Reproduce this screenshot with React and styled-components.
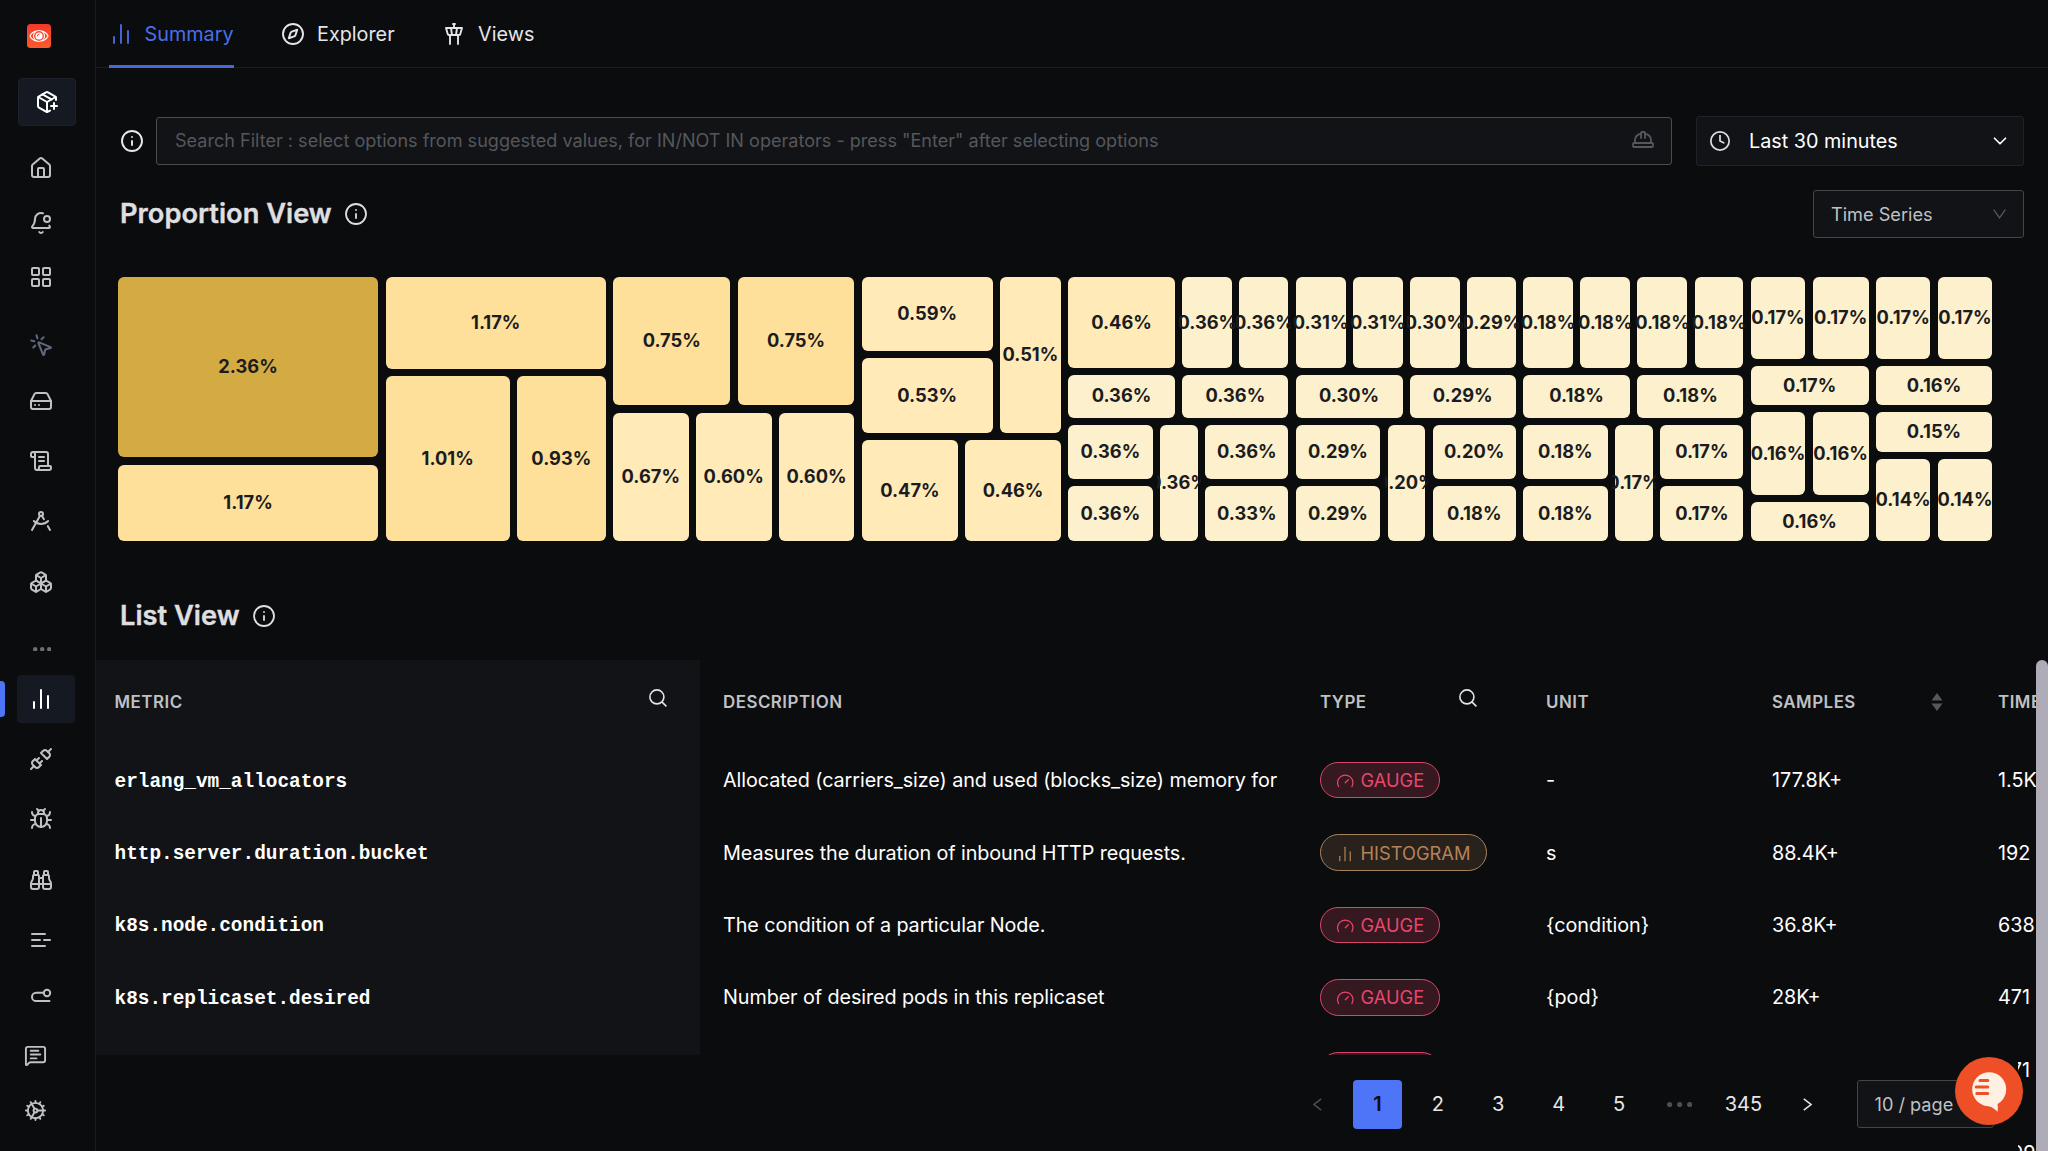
import React from 'react';
import styled, { createGlobalStyle, css } from 'styled-components';
import {
  BellDot,
  Binoculars,
  Boxes,
  Bug,
  ChartNoAxesColumn,
  ChevronDown,
  Clock,
  Cog,
  Compass,
  DraftingCompass,
  Gauge,
  HardDrive,
  HardHat,
  House,
  Info,
  LayoutGrid,
  MessageSquareText,
  MousePointerClick,
  PackagePlus,
  ScrollText,
  TowerControl,
  Unplug,
} from 'lucide-react';

const GlobalStyle = createGlobalStyle`
  *, *::before, *::after { box-sizing: border-box; }
  html, body { margin: 0; background: #0b0c0e; overflow: hidden; }
  body { font-family: Inter, "Liberation Sans", sans-serif; color: #fff; }
`;

/* ---------- shell ---------- */

const Shell = styled.div`
  position: relative;
  display: grid;
  grid-template-columns: 96px 1fr;
  width: 2048px;
  height: 1151px;
  overflow: hidden;
  background: #0b0c0e;
`;

const Sidebar = styled.nav`
  display: flex;
  flex-direction: column;
  align-items: flex-start;
  border-right: 1px solid #1b1c1f;
  padding-top: 24px;
`;

const LogoBox = styled.div`
  display: flex;
  width: 24px;
  height: 24px;
  margin-left: 27px;
  border-radius: 3.5px;
  background: linear-gradient(180deg, #f2392c, #fb5a2e);
`;

const NewSource = styled.div`
  display: flex;
  align-items: center;
  justify-content: center;
  width: 58px;
  height: 48px;
  margin: 30px 0 0 18px;
  border: 1px solid #1d212b;
  border-radius: 4px;
  background: #151921;
  color: #fff;
`;

const NavItem = styled.div`
  position: relative;
  display: flex;
  align-items: center;
  width: 58px;
  height: 48px;
  margin: ${(p) => p.$gap}px 0 0 17px;
  padding-left: ${(p) => p.$inset ?? 12}px;
  border-radius: 4px;
  color: ${(p) => (p.$muted ? '#62687c' : '#c0c1c3')};
  ${(p) =>
    p.$active &&
    css`
      background: #151921;
      color: #fff;
      &::before {
        content: '';
        position: absolute;
        left: -17px;
        top: 6px;
        width: 5px;
        height: 36px;
        border-radius: 0 4px 4px 0;
        background: #4e74f8;
      }
    `}
`;

const Main = styled.main`
  display: flex;
  flex-direction: column;
  min-width: 0;
`;

/* ---------- tabs ---------- */

const TabBar = styled.div`
  display: flex;
  flex: none;
  gap: 47.5px;
  height: 68px;
  padding-left: 12.5px;
  border-bottom: 1px solid #1b1d26;
`;

const Tab = styled.div`
  display: flex;
  align-items: center;
  gap: 12px;
  height: 68px;
  font-size: 19.8px;
  border-bottom: 3.5px solid ${(p) => (p.$active ? '#4568dc' : 'transparent')};
  padding-top: 2px;
  color: ${(p) => (p.$active ? '#4a6fe9' : '#e4e5e7')};
`;

/* ---------- filter row ---------- */

const FilterRow = styled.div`
  display: flex;
  flex: none;
  align-items: center;
  height: 50px;
  margin-top: 48px;
  padding: 0 24px;
`;

const SearchBox = styled.div`
  display: flex;
  align-items: center;
  justify-content: space-between;
  width: 1516px;
  height: 48px;
  margin: 0 24px 0 12px;
  padding: 0 16px 1.5px 18px;
  border: 1px solid #4a4c50;
  border-radius: 3px;
  background: #111317;
  color: #55575b;
  font-size: 18.07px;
`;

const TimePicker = styled.div`
  display: flex;
  align-items: center;
  flex: 1;
  height: 50px;
  padding: 0 12px 1px 12px;
  border: 1px solid #1f222b;
  border-radius: 3px;
  background: #111317;
  font-size: 19.8px;
  color: #fff;
`;

const TimeLabel = styled.span`
  flex: 1;
  margin-left: 18px;
`;

/* ---------- sections ---------- */

const SectionHeader = styled.div`
  display: flex;
  flex: none;
  align-items: center;
  height: 48px;
  margin-top: ${(p) => p.$top}px;
  padding: 0 24px;
`;

const SectionTitle = styled.h2`
  margin: 0 12px 0 0;
  padding-bottom: 1px;
  font-size: 27.25px;
  font-weight: 600;
  color: #dfdfe0;
  white-space: nowrap;
  -webkit-text-stroke: 0.4px #dfdfe0;
`;

const Spacer = styled.div`
  flex: 1;
`;

const Select = styled.div`
  display: flex;
  align-items: center;
  justify-content: space-between;
  width: ${(p) => p.$width}px;
  height: 48px;
  padding: 0 17px 1px;
  border: 1px solid #42454a;
  border-radius: 3px;
  background: #111317;
  color: #c0c1c3;
  font-size: 18.15px;
  white-space: nowrap;
`;

/* ---------- treemap ---------- */

const TreemapBox = styled.div`
  display: flex;
  flex: none;
  width: 1874.6px;
  height: 264px;
  margin: 39px 0 0 21.7px;
`;

const Split = styled.div`
  display: flex;
  flex: ${(p) => p.$size} 1 0;
  flex-direction: ${(p) => (p.$column ? 'column' : 'row')};
  gap: 7.2px;
  min-width: 0;
  min-height: 0;
`;

const tileColors = { high: '#d4aa43', mid: '#fee09a', low: '#ffeab8', faint: '#fdf0cd' };

const Tile = styled.div`
  display: flex;
  flex: ${(p) => p.$size} 1 0;
  align-items: center;
  justify-content: center;
  min-width: 0;
  min-height: 0;
  padding-bottom: 1.5px;
  overflow: clip;
  overflow-clip-margin: 3px;
  border-radius: 6px;
  background: ${(p) => tileColors[p.$tone]};
  color: #1b1c20;
  font-size: 18.3px;
  font-weight: 700;
  white-space: nowrap;
`;

/* ---------- table ---------- */

const Table = styled.div`
  display: flex;
  flex-direction: column;
  flex: none;
  margin-top: 20px;
`;

const columns = '604px 602px 226px 226px 226px 68px';

const HeadRow = styled.div`
  display: grid;
  grid-template-columns: ${columns};
  height: 84px;
`;

const HeadCell = styled.div`
  display: flex;
  align-items: center;
  justify-content: space-between;
  padding-left: ${(p) => p.$left ?? 18}px;
  padding-right: ${(p) => p.$right ?? 0}px;
  background: ${(p) => (p.$pinned ? '#111317' : 'transparent')};
  color: #c0c1c3;
  font-size: 16.9px;
  font-weight: 600;
  letter-spacing: 0.5px;
  white-space: nowrap;
  overflow: hidden;

  svg { flex: none; }
`;

const SearchSlot = styled.span`
  display: flex;
  margin-bottom: 8px;
`;

const Row = styled.div`
  display: grid;
  grid-template-columns: ${columns};
  height: ${(p) => p.$height}px;
`;

const Cell = styled.div`
  display: flex;
  align-items: center;
  min-width: 0;
  padding-left: ${(p) => p.$left ?? 18}px;
  font-size: 19.8px;
  white-space: nowrap;
  color: #fff;
`;

const MetricCell = styled(Cell)`
  padding-top: 3px;
  background: #111317;
  font-family: "Liberation Mono", "DejaVu Sans Mono", monospace;
  font-size: 19.4px;
  font-weight: 700;
`;

const Description = styled.span`
  letter-spacing: -0.09px;
`;

const pillTones = {
  GAUGE: { bg: '#351820', line: '#d9466c', text: '#e8476c' },
  HISTOGRAM: { bg: '#29211c', line: '#a8845c', text: '#b58258' },
};

const Pill = styled.span`
  display: flex;
  align-items: center;
  gap: 6px;
  height: 36.5px;
  padding: 0 15px 0 15px;
  border: 1.4px solid ${(p) => pillTones[p.$kind].line};
  border-radius: 19px;
  background: ${(p) => pillTones[p.$kind].bg};
  color: ${(p) => pillTones[p.$kind].text};
  font-size: 18.3px;
`;

const PillIcon = styled.span`
  display: flex;
  justify-content: center;
  width: 18.5px;
  padding-top: 2px;
`;

/* ---------- overlays ---------- */

const Pager = styled.div`
  position: absolute;
  left: 96px;
  bottom: 0;
  width: 1921.5px;
  height: 96px;
  display: flex;
  justify-content: flex-end;
  gap: 12px;
  padding: 25px 24px 0 0;
  background: #0b0c0e;
`;

const PageButton = styled.div`
  display: flex;
  align-items: center;
  justify-content: center;
  width: ${(p) => p.$width ?? 48.4}px;
  height: 48.5px;
  border-radius: 4px;
  font-size: 20px;
  color: ${(p) => (p.$active ? '#0b0c0e' : '#e6e6e7')};
  background: ${(p) => (p.$active ? '#4e74f8' : 'transparent')};
  font-weight: ${(p) => (p.$active ? 600 : 400)};
`;

const PageSize = styled.div`
  margin-left: 13px;
`;

const ChatButton = styled.div`
  position: absolute;
  left: 1955.3px;
  top: 1057px;
  display: flex;
  width: 68px;
  height: 68px;
  border-radius: 50%;
  background: #ee4f27;
`;

const ScrollThumb = styled.div`
  position: absolute;
  right: 0;
  top: 660px;
  bottom: 0;
  width: 12.4px;
  border-radius: 6px 6px 0 0;
  background: #aeacb6;
`;

/* ---------- drawings ---------- */

const LogoMark = () => (
  <svg width="24" height="24" viewBox="0 0 24 24" fill="none" stroke="#fff">
    <path d="M9 7.2C6 7.8 4 10 3 12c1 2 3 4.2 6 4.8M15 7.2c3 .6 5 2.8 6 4.8-1 2-3 4.2-6 4.8" strokeWidth="1.2" strokeLinecap="round" />
    <circle cx="12" cy="12" r="5.500" strokeWidth="1.1" />
    <circle cx="12" cy="12" r="3.6" fill="#fff" stroke="none" />
    <path d="M10.2 12a1.9 1.9 0 0 1 1.9-1.9" stroke="#f4472d" strokeWidth=".9" strokeLinecap="round" />
  </svg>
);

const LogLinesIcon = () => (
  <svg width="24" height="24" viewBox="0 0 24 24" fill="none" stroke="currentColor" strokeWidth="2" strokeLinecap="round">
    <path d="M3 6h13M3 12h8M15 12h6M3 18h13" />
  </svg>
);

const RouteIcon = () => (
  <svg width="24" height="24" viewBox="0 0 24 24" fill="none" stroke="currentColor" strokeWidth="2" strokeLinecap="round">
    <circle cx="18" cy="10" r="3.2" />
    <path d="M14.5 9.7H7.2a4.2 4.2 0 0 0 0 8.4H20.5" />
  </svg>
);

const DotsIcon = ({ gap, r, color }) => (
  <svg width={gap * 2 + r * 2} height={r * 2} fill={color}>
    {[0, 1, 2].map((i) => (
      <circle key={i} cx={r + i * gap} cy={r} r={r} />
    ))}
  </svg>
);

const SearchIcon = () => (
  <svg width="18" height="18" viewBox="0 0 18 18" fill="none" stroke="#e3e4e5" strokeWidth="1.6">
    <circle cx="7.9" cy="7.9" r="7" />
    <path d="M12.9 12.9l4.5 4.5" />
  </svg>
);

const SortIcon = () => (
  <svg width="12" height="18" viewBox="0 0 12 18" fill="#55575b">
    <path d="M6 0l5.500 7.500H.5zM6 18l5.500-7.500H.5z" />
  </svg>
);

const ThinChevron = ({ color = '#55575b' }) => (
  <svg width="13" height="10" viewBox="0 0 13 10" fill="none" stroke={color} strokeWidth="1.3">
    <path d="M.7.7l5.800 8.200L12.300.7" />
  </svg>
);

const ArrowIcon = ({ flip, color }) => (
  <svg width="9" height="13" viewBox="0 0 9 13" fill="none" stroke={color} strokeWidth="1.5">
    <path d={flip ? 'M8.2.8L1 6.500l7.200 5.700' : 'M.8.8L8 6.500.8 12.200'} />
  </svg>
);

const ChatIcon = () => (
  <svg width="68" height="68" viewBox="0 0 68 68">
    <circle cx="34.2" cy="32.3" r="17" fill="#fef1e3" />
    <path d="M30 48.500c4 0 8.500 2.200 12.600 6.200.4-3 .3-6-.2-9z" fill="#fef1e3" />
    <path d="M25 23.400h7.800M21.200 30h11.600M21.800 36.400h11" stroke="#ee4f27" strokeWidth="3" strokeLinecap="round" />
  </svg>
);

/* ---------- data ---------- */

const navItems = [
  { icon: <House />, gap: 18 },
  { icon: <BellDot />, gap: 7 },
  { icon: <LayoutGrid />, gap: 6 },
  { icon: <MousePointerClick size={25} />, gap: 20, muted: true },
  { icon: <HardDrive />, gap: 8 },
  { icon: <ScrollText />, gap: 12 },
  { icon: <DraftingCompass />, gap: 12 },
  { icon: <Boxes />, gap: 13 },
  { icon: <DotsIcon gap={7} r={2.2} color="#6c6f78" />, gap: 19, inset: 16 },
  { icon: <ChartNoAxesColumn />, gap: 2, active: true },
  { icon: <Unplug />, gap: 12 },
  { icon: <Bug />, gap: 12 },
  { icon: <Binoculars />, gap: 13 },
  { icon: <LogLinesIcon />, gap: 12 },
  { icon: <RouteIcon />, gap: 7 },
  { icon: <MessageSquareText size={23} />, gap: 12, inset: 7 },
  { icon: <Cog size={23} />, gap: 7, inset: 7 },
];

const row = (size, ...items) => ({ size, items });
const col = (size, ...items) => ({ size, items, column: true });
const t = (size, label, tone = 'faint') => ({ size, label, tone });

const treemap = row(
  1,
  col(261, t(181, '2.36%', 'high'), t(75.8, '1.17%', 'mid')),
  col(220.3, t(90.7, '1.17%', 'mid'), row(166, t(124, '1.01%', 'mid'), t(89, '0.93%', 'mid'))),
  col(
    241.6,
    row(128.3, t(117.6, '0.75%', 'mid'), t(116.8, '0.75%', 'mid')),
    row(128.5, t(75.8, '0.67%', 'low'), t(75.8, '0.60%', 'low'), t(75.8, '0.60%', 'low'))
  ),
  col(
    199.3,
    row(155.7, col(131.4, t(74, '0.59%', 'low'), t(74.5, '0.53%', 'low')), t(60.7, '0.51%', 'low')),
    row(101, t(96.8, '0.47%', 'low'), t(95.3, '0.46%', 'low'))
  ),
  col(
    220.7,
    row(90.7, t(107.3, '0.46%', 'low'), t(50, '0.36%'), t(49, '0.36%')),
    row(42.6, t(107.3, '0.36%'), t(106.2, '0.36%')),
    row(116.3, col(85, t(54.7, '0.36%'), t(54.7, '0.36%')), t(38, '0.36%'), col(83.3, t(54.7, '0.36%'), t(54.7, '0.33%')))
  ),
  col(
    220.3,
    row(90.7, t(50, '0.31%'), t(50, '0.31%'), t(50, '0.30%'), t(48.7, '0.29%')),
    row(42.6, t(107, '0.30%'), t(106, '0.29%')),
    row(116.3, col(85, t(54.7, '0.29%'), t(54.7, '0.29%')), t(38, '0.20%'), col(83.3, t(54.7, '0.20%'), t(54.7, '0.18%')))
  ),
  col(
    220.7,
    row(90.7, t(50, '0.18%'), t(50, '0.18%'), t(50, '0.18%'), t(48.7, '0.18%')),
    row(42.6, t(107.3, '0.18%'), t(106, '0.18%')),
    row(116.3, col(85, t(54.7, '0.18%'), t(54.7, '0.18%')), t(38, '0.17%'), col(83.3, t(54.7, '0.17%'), t(54.7, '0.17%')))
  ),
  col(
    118,
    row(83, t(54.7, '0.17%'), t(55.8, '0.17%')),
    t(38, '0.17%'),
    row(83.6, t(54.7, '0.16%'), t(55.8, '0.16%')),
    t(38, '0.16%')
  ),
  col(
    116.7,
    row(83, t(54.7, '0.17%'), t(54.7, '0.17%')),
    t(38, '0.16%'),
    t(38.4, '0.15%'),
    row(83, t(54.7, '0.14%'), t(54.7, '0.14%'))
  )
);

const metrics = [
  ['erlang_vm_allocators', 'Allocated (carriers_size) and used (blocks_size) memory for', 'GAUGE', '-', '177.8K+', '1.5K+'],
  ['http.server.duration.bucket', 'Measures the duration of inbound HTTP requests.', 'HISTOGRAM', 's', '88.4K+', '192'],
  ['k8s.node.condition', 'The condition of a particular Node.', 'GAUGE', '{condition}', '36.8K+', '638'],
  ['k8s.replicaset.desired', 'Number of desired pods in this replicaset', 'GAUGE', '{pod}', '28K+', '471'],
  ['', '', 'GAUGE', '', '', '471'],
  ['', '', '', '', '', '409', 95],
];

function Node({ node }) {
  if (!node.items) {
    return (
      <Tile $size={node.size} $tone={node.tone}>
        {node.label}
      </Tile>
    );
  }
  return (
    <Split $size={node.size} $column={node.column}>
      {node.items.map((child, i) => (
        <Node key={i} node={child} />
      ))}
    </Split>
  );
}

function TypePill({ kind }) {
  return (
    <Pill $kind={kind}>
      <PillIcon>
        {kind === 'GAUGE' ? <Gauge size={18.5} strokeWidth={1.6} /> : <ChartNoAxesColumn size={18} strokeWidth={1.6} />}
      </PillIcon>
      {kind}
    </Pill>
  );
}

export default function App() {
  return (
    <>
      <GlobalStyle />
      <Shell>
        <Sidebar>
          <LogoBox>
            <LogoMark />
          </LogoBox>
          <NewSource>
            <PackagePlus size={24} />
          </NewSource>
          {navItems.map((item, i) => (
            <NavItem key={i} $gap={item.gap} $inset={item.inset} $muted={item.muted} $active={item.active}>
              {item.icon}
            </NavItem>
          ))}
        </Sidebar>

        <Main>
          <TabBar>
            <Tab $active>
              <ChartNoAxesColumn size={24} strokeWidth={1.8} />
              Summary
            </Tab>
            <Tab>
              <Compass size={24} strokeWidth={1.9} />
              Explorer
            </Tab>
            <Tab>
              <TowerControl size={24} strokeWidth={1.9} />
              Views
            </Tab>
          </TabBar>

          <FilterRow>
            <Info size={24} strokeWidth={1.9} color="#e8e8e9" />
            <SearchBox>
              Search Filter : select options from suggested values, for IN/NOT IN operators - press "Enter" after selecting options
              <HardHat size={24} strokeWidth={1.8} />
            </SearchBox>
            <TimePicker>
              <Clock size={22} strokeWidth={1.9} color="#dcdddf" />
              <TimeLabel>Last 30 minutes</TimeLabel>
              <ChevronDown size={22} strokeWidth={1.9} />
            </TimePicker>
          </FilterRow>

          <SectionHeader $top={24}>
            <SectionTitle>Proportion View</SectionTitle>
            <Info size={24} strokeWidth={1.8} color="#dfdfe0" />
            <Spacer />
            <Select $width={211}>
              Time Series
              <ThinChevron />
            </Select>
          </SectionHeader>

          <TreemapBox>
            <Node node={treemap} />
          </TreemapBox>

          <SectionHeader $top={51}>
            <SectionTitle>List View</SectionTitle>
            <Info size={24} strokeWidth={1.8} color="#dfdfe0" />
          </SectionHeader>

          <Table>
            <HeadRow>
              <HeadCell $pinned $left={18.5} $right={33.5}>
                METRIC
                <SearchSlot>
                  <SearchIcon />
                </SearchSlot>
              </HeadCell>
              <HeadCell $left={23}>DESCRIPTION</HeadCell>
              <HeadCell $right={51}>
                TYPE
                <SearchSlot>
                  <SearchIcon />
                </SearchSlot>
              </HeadCell>
              <HeadCell>UNIT</HeadCell>
              <HeadCell $right={37.5}>
                SAMPLES
                <SortIcon />
              </HeadCell>
              <HeadCell>TIME</HeadCell>
            </HeadRow>
            {metrics.map(([name, description, kind, unit, samples, series, height = 72.4], i) => (
              <Row key={i} $height={height}>
                <MetricCell $left={18.5}>{name}</MetricCell>
                <Cell $left={23}>
                  <Description>{description}</Description>
                </Cell>
                <Cell>{kind && <TypePill kind={kind} />}</Cell>
                <Cell>{unit}</Cell>
                <Cell>{samples}</Cell>
                <Cell>{series}</Cell>
              </Row>
            ))}
          </Table>
        </Main>

        <Pager>
          <PageButton>
            <ArrowIcon flip color="#4c4e52" />
          </PageButton>
          <PageButton $active>1</PageButton>
          <PageButton>2</PageButton>
          <PageButton>3</PageButton>
          <PageButton>4</PageButton>
          <PageButton>5</PageButton>
          <PageButton>
            <DotsIcon gap={10} r={2.6} color="#4c4e52" />
          </PageButton>
          <PageButton $width={55.5}>345</PageButton>
          <PageButton>
            <ArrowIcon color="#e6e6e7" />
          </PageButton>
          <PageSize>
            <Select $width={137}>10 / page</Select>
          </PageSize>
        </Pager>
        <ScrollThumb />
        <ChatButton>
          <ChatIcon />
        </ChatButton>
      </Shell>
    </>
  );
}
